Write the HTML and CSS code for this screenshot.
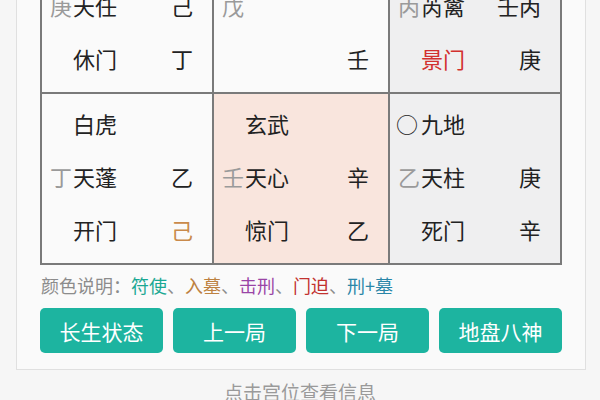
FILE: index.html
```html
<!doctype html>
<html lang="zh">

<head>
    <meta charset="UTF-8">
    <meta name="viewport" content="width=device-width, initial-scale=1.0">
    <title>奇门排盘</title>
    <link rel="stylesheet" href="styles.css">
</head>

<body>
    <section class="panel">
        <div class="pan">
            <div class="gong">
                <div class="line"><span class="lead"></span><span class="main">九天</span><span class="side"></span></div>
                <div class="line"><span class="lead">庚</span><span class="main">天任</span><span class="side">己</span></div>
                <div class="line"><span class="lead"></span><span class="main">休门</span><span class="side">丁</span></div>
            </div>
            <div class="gong">
                <div class="line"><span class="lead"></span><span class="main">值符</span><span class="side"></span></div>
                <div class="line"><span class="lead">戊</span><span class="main"></span><span class="side"></span></div>
                <div class="line"><span class="lead"></span><span class="main"></span><span class="side">壬</span></div>
            </div>
            <div class="gong gong--grey">
                <div class="line"><span class="lead"></span><span class="main">腾蛇</span><span class="side"></span></div>
                <div class="line"><span class="lead">丙</span><span class="main">芮禽</span><span class="side">壬丙</span></div>
                <div class="line"><span class="lead"></span><span class="main red">景门</span><span class="side">庚</span></div>
            </div>

            <div class="gong">
                <div class="line"><span class="lead"></span><span class="main">白虎</span><span class="side"></span></div>
                <div class="line"><span class="lead">丁</span><span class="main">天蓬</span><span class="side">乙</span></div>
                <div class="line"><span class="lead"></span><span class="main">开门</span><span class="side orange">己</span></div>
            </div>
            <div class="gong gong--pink">
                <div class="line"><span class="lead"></span><span class="main">玄武</span><span class="side"></span></div>
                <div class="line"><span class="lead">壬</span><span class="main">天心</span><span class="side">辛</span></div>
                <div class="line"><span class="lead"></span><span class="main">惊门</span><span class="side">乙</span></div>
            </div>
            <div class="gong gong--grey">
                <div class="line"><span class="lead dark">○</span><span class="main">九地</span><span class="side"></span></div>
                <div class="line"><span class="lead">乙</span><span class="main">天柱</span><span class="side">庚</span></div>
                <div class="line"><span class="lead"></span><span class="main">死门</span><span class="side">辛</span></div>
            </div>
        </div>

        <p class="legend">颜色说明：<span class="c-fu">符使</span>、<span class="c-mu">入墓</span>、<span class="c-xing">击刑</span>、<span class="c-po">门迫</span>、<span class="c-xm">刑+墓</span></p>

        <div class="actions">
            <button class="btn">长生状态</button>
            <button class="btn">上一局</button>
            <button class="btn">下一局</button>
            <button class="btn">地盘八神</button>
        </div>
    </section>

    <p class="hint">点击宫位查看信息</p>
</body>

</html>
```

FILE: styles.css
```css
body {
    margin: 0;
    background-color: #f6f6f6;
    font-family: "Noto Sans CJK SC", "Noto Sans", sans-serif;
    color: #222222;
}

.panel {
    margin: -90px 14px 0 16px;
    padding: 10px 23px 16px 23px;
    background-color: #fafafa;
    border: 1px solid #e0e0e0;
}

.pan {
    display: grid;
    grid-template-columns: 170px 174px 170px;
    gap: 2px;
    padding: 2px;
    background-color: #7a7a7a;
    width: 518px;
}

.gong {
    background-color: #fafafa;
    padding: 3px 19px 7px 8px;
    height: 159px;
}

.gong--grey {
    background-color: #efeff0;
}

.gong--pink {
    background-color: #f9e5dd;
}

.line {
    display: flex;
    height: 53px;
    line-height: 53px;
    font-size: 22px;
}

.lead {
    width: 23px;
    color: #9a9a9a;
}

.lead.dark {
    color: #222222;
    margin-left: -2px;
    width: 25px;
}

.main {
    flex: 1;
}

.side {
    text-align: right;
}

.red {
    color: #d2302e;
}

.orange {
    color: #c98a4b;
}

.legend {
    margin: 6px 0 0 1px;
    font-size: 18px;
    line-height: 28px;
    color: #8c8c8c;
}

.c-fu {
    color: #1aa893;
}

.c-mu {
    color: #bd8140;
}

.c-xing {
    color: #9a45a6;
}

.c-po {
    color: #c2322f;
}

.c-xm {
    color: #2a86a8;
}

.actions {
    display: grid;
    grid-template-columns: repeat(4, 1fr);
    gap: 10px;
    margin-top: 9px;
}

.btn {
    height: 45px;
    border: none;
    border-radius: 5px;
    background-color: #1db4a0;
    color: #ffffff;
    font-family: "Noto Sans CJK SC", "Noto Sans", sans-serif;
    font-size: 21px;
}

.hint {
    margin: 9px 0 0;
    text-align: center;
    font-size: 19px;
    line-height: 26px;
    color: #9a9a9a;
}
```
